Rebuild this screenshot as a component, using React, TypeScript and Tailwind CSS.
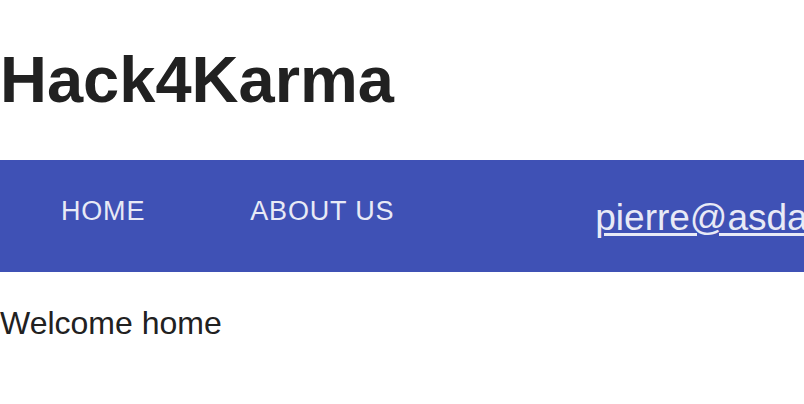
import React from 'react';

const NavLink = ({ label, className }: { label: string; className: string }) => (
  <a
    href="#"
    className={`block text-[27px] leading-[32px] tracking-[0.03em] uppercase text-[#e8eaf6] mt-[35px] ${className}`}
  >
    {label}
  </a>
);

export default function App() {
  return (
    <div className="min-h-[404px] w-[804px] overflow-hidden bg-white font-['Liberation_Sans',Arial,sans-serif] text-[#212121]">
      <header>
        <h1 className="pt-[42px] pb-[42px] text-[65px] leading-[76px] font-bold whitespace-nowrap">
          Hack4Karma
        </h1>
        <nav className="flex h-[112px] items-start bg-[#3f51b5] whitespace-nowrap">
          <NavLink label="Home" className="ml-[61px]" />
          <NavLink label="About us" className="ml-[105px]" />
          <a
            href="#"
            className="ml-[201px] mt-[38px] block text-[37px] leading-[40px] text-[#e8eaf6] underline decoration-[3px] underline-offset-[3px]"
          >
            pierre@asdasd.com
          </a>
        </nav>
      </header>
      <main className="pt-[33px]">
        <p className="text-[32px] leading-[37px]">Welcome home</p>
      </main>
    </div>
  );
}
